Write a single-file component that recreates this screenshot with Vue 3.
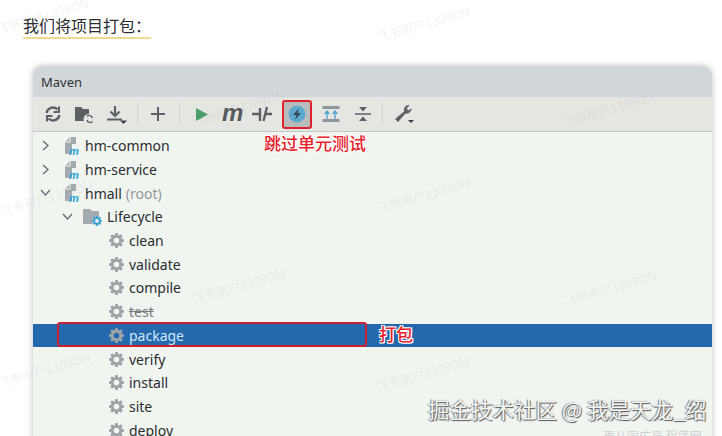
<script setup>
const tree = [
  { name: 'hm-common', icon: 'module', level: 0, arrow: 'right' },
  { name: 'hm-service', icon: 'module', level: 0, arrow: 'right' },
  { name: 'hmall', extra: '(root)', icon: 'module', level: 0, arrow: 'down' },
  { name: 'Lifecycle', icon: 'folder', level: 1, arrow: 'down' },
  { name: 'clean', icon: 'gear', level: 2 },
  { name: 'validate', icon: 'gear', level: 2 },
  { name: 'compile', icon: 'gear', level: 2 },
  { name: 'test', icon: 'gear', level: 2, struck: true },
  { name: 'package', icon: 'gear', level: 2, selected: true },
  { name: 'verify', icon: 'gear', level: 2 },
  { name: 'install', icon: 'gear', level: 2 },
  { name: 'site', icon: 'gear', level: 2 },
  { name: 'deploy', icon: 'gear', level: 2 }
]
const gearPath = 'M6.7 0h2.6l.4 2.1 1.2.5 1.8-1.2 1.9 1.9-1.2 1.8.5 1.2 2.1.4v2.6l-2.1.4-.5 1.2 1.2 1.8-1.9 1.9-1.8-1.2-1.2.5-.4 2.1H6.7l-.4-2.1-1.2-.5-1.8 1.2-1.9-1.9 1.2-1.8-.5-1.2L0 9.3V6.700l2.1-.4.5-1.2-1.2-1.8 1.9-1.9 1.8 1.2 1.2-.5zM8 5a3 3 0 1 0 0 6 3 3 0 0 0 0-6z'
const marks = [
  { x: -6, y: 8 }, { x: 375, y: 16 }, { x: 190, y: 100 }, { x: 560, y: 101 }, { x: -2, y: 190 },
  { x: 375, y: 187 }, { x: 190, y: 278 }, { x: 562, y: 280 }, { x: -4, y: 362 }, { x: 374, y: 366 }
]
</script>

<template>
  <div class="page">
    <p class="heading"><span class="heading-text">我们将项目打包：</span></p>
    <section class="window">
      <header class="title">Maven</header>
      <div class="toolbar">
        <svg class="tool" width="18" height="18" viewBox="0 0 18 18" fill="none" stroke="#5d6164" stroke-width="2.4">
          <path d="M2.500 8a6.500 6.500 0 0 1 11-3.500M15.500 10a6.500 6.500 0 0 1-11 3.500"/>
          <path d="M15 1.500v5.500h-5.500M3 16.500v-5.500h5.500" stroke-width="2"/>
        </svg>
        <svg class="tool folder-tool" width="21" height="19" viewBox="0 0 21 19">
          <path d="M1 2h6l2 2h6v5a5 5 0 0 0-5 7H1z" fill="#5d6164"/>
          <path d="M18.500 13a3.200 3.200 0 0 0-5.500-1.500M13 15a3.200 3.200 0 0 0 5.500 1.500" fill="none" stroke="#5d6164" stroke-width="1.300"/>
        </svg>
        <svg class="tool download-tool" width="20" height="19" viewBox="0 0 20 19" fill="none" stroke="#5d6164" stroke-width="2.200">
          <path d="M8 1v9M3.500 6.500 8 11l4.500-4.500M0 14.500h15"/>
          <path d="M13 15.500h7l-3.500 3.500z" fill="#3d4042" stroke="none"/>
        </svg>
        <span class="sep first"></span>
        <svg class="tool" width="14" height="14" viewBox="0 0 14 14" fill="none" stroke="#5d6164" stroke-width="2">
          <path d="M7 0v14M0 7h14"/>
        </svg>
        <span class="sep second"></span>
        <svg class="tool" width="14" height="15" viewBox="0 0 14 15"><path d="M1 1l12 6.500-12 6.500z" fill="#4a9e68"/></svg>
        <span class="tool-m">m</span>
        <svg class="tool break-tool" width="20" height="18" viewBox="0 0 20 18" fill="none" stroke="#5d6164" stroke-width="2.400">
          <path d="M0 9h7M13 9h7M8 3v13M15 2l-3.500 14"/>
        </svg>
        <span class="skip-button">
          <svg width="18" height="18" viewBox="0 0 18 18">
            <circle cx="9" cy="9" r="8.500" fill="#5fa9cf"/>
            <path d="M11 3 5 10h3.500L7 15l6-7H9.500z" fill="#34495c"/>
          </svg>
        </span>
        <svg class="tool expand-tool" width="18" height="18" viewBox="0 0 18 18">
          <rect x="0.500" y="1" width="17" height="3" fill="#8f9498"/>
          <rect x="0.500" y="14" width="17" height="3" fill="#8f9498"/>
          <path d="M5 14V7M2.800 9 5 6l2.200 3M13 14V7M10.800 9 13 6l2.200 3" fill="none" stroke="#4ba3d1" stroke-width="1.300"/>
        </svg>
        <svg class="tool collapse-tool" width="16" height="18" viewBox="0 0 16 18">
          <path d="M4 2h8L8 6.500zM4 16h8L8 11.500z" fill="#5d6164"/>
          <path d="M0 9h16" stroke="#5d6164" stroke-width="1.600"/>
        </svg>
        <span class="sep third"></span>
        <svg class="tool" width="21" height="20" viewBox="0 0 21 20">
          <path d="M15 1a5 5 0 0 0-5 6.500L1 15l3 3 7.500-8.500A5 5 0 0 0 17.500 4l-3 2.500-2-2L15.500 1.500z" fill="#5d6164"/>
          <path d="M14 16h6l-3 3z" fill="#3c3f41"/>
        </svg>
      </div>
      <ul class="tree">
        <li v-for="row in tree" :key="row.name" class="row" :class="[`level-${row.level}`, { selected: row.selected }]">
          <svg v-if="row.arrow" class="arrow" width="11" height="11" viewBox="0 0 11 11" fill="none" stroke="#6b6f72" stroke-width="1.400">
            <path :d="row.arrow === 'right' ? 'M3 1l5 4.500-5 4.500' : 'M1 3l4.500 5 4.500-5'"/>
          </svg>
          <svg v-if="row.icon === 'module'" class="icon module" width="18" height="20" viewBox="0 0 18 20">
            <path d="M6 1h6v7H8v10H1V6z" fill="#a4abb0"/>
            <path d="M6 1v5H1" fill="none" stroke="#f1f5f0" stroke-width="1"/>
            <text x="5" y="19" class="module-m">m</text>
          </svg>
          <svg v-else-if="row.icon === 'folder'" class="icon folder" width="19" height="18" viewBox="0 0 19 18">
            <path d="M0 1h7l2 2h7v6a5 5 0 0 0-6 7H0z" fill="#a4abb0"/>
            <path :d="gearPath" transform="translate(9 8) scale(.62)" fill="#3da2d4" fill-rule="evenodd"/>
          </svg>
          <svg v-else class="icon gear" width="15" height="15" viewBox="0 0 16 16">
            <path :d="gearPath" fill="#9ea3a6" fill-rule="evenodd"/>
          </svg>
          <span class="label" :class="{ struck: row.struck }">{{ row.name }}</span>
          <span v-if="row.extra" class="extra">{{ row.extra }}</span>
        </li>
      </ul>
    </section>

    <span class="skip-label">跳过单元测试</span>
    <span class="package-box"></span>
    <span class="package-label">打包</span>
    <span class="credit">掘金技术社区 @ 我是天龙_绍</span>
    <span class="credit-sub">更从同広员 程序网</span>
    <span v-for="m in marks" :key="`${m.x}-${m.y}`" class="mark" :style="{ left: `${m.x}px`, top: `${m.y}px` }">飞书用户1309ON</span>
  </div>
</template>

<style>
html, body { margin: 0; background: #fff; overflow: hidden; }
</style>

<style scoped>
.page {
  position: relative;
  width: 722px;
  height: 436px;
  overflow: hidden;
  background: #fff;
  font-family: "Noto Sans", "Noto Sans CJK SC", sans-serif;
  color: #25282b;
}
.heading {
  margin: 0;
  padding: 14px 0 0 23px;
  height: 51px;
  box-sizing: border-box;
  font-size: 16px;
  line-height: 22px;
}
.heading-text {
  display: inline-block;
  height: 23px;
  border-bottom: 2px solid #efd98e;
  font-family: "Noto Sans CJK SC", sans-serif;
  color: #2b2d30;
}
.window {
  margin: 15px 0 0 33px;
  width: 679px;
  height: 390px;
  border-radius: 9px 9px 0 0;
  background: #f1f5f0;
  box-shadow: 0 0 6px rgba(90, 95, 100, .4);
  overflow: hidden;
}
.title {
  height: 31px;
  padding-left: 8px;
  background: #d1d7d9;
  font-size: 13px;
  line-height: 33px;
  color: #2f3336;
}
.toolbar {
  display: flex;
  align-items: center;
  height: 35px;
  box-sizing: border-box;
  padding-left: 11px;
  background: #e4e6e1;
  border-bottom: 1px solid #c4c7c6;
}
.tool { flex: none; }
.folder-tool { margin-left: 12px; }
.download-tool { margin-left: 12px; }
.break-tool { margin-left: 9px; }
.expand-tool { margin-left: 10px; }
.collapse-tool { margin-left: 15px; }
.sep {
  flex: none;
  width: 1px;
  height: 22px;
  background: #cfd2cf;
}
.sep.first { margin: 0 13px 0 10px; }
.sep.second { margin: 0 15px 0 14px; }
.sep.third { margin: 0 11px 0 11px; }
.tool-m {
  margin-left: 13px;
  font: italic 700 24px/20px "Liberation Sans", sans-serif;
  color: #55595c;
  position: relative;
  top: -1px;
}
.skip-button {
  display: flex;
  align-items: center;
  justify-content: center;
  flex: none;
  width: 30px;
  height: 29px;
  margin-left: 10px;
  box-sizing: border-box;
  border: 2.500px solid #e0202c;
  border-radius: 3px;
  background: #b9bcbc;
}
.tree {
  list-style: none;
  margin: 0;
  padding: 2px 0 0;
}
.row {
  position: relative;
  display: flex;
  align-items: center;
  height: 23.700px;
  font-size: 14px;
  color: #2a2d30;
}
.level-0 { padding-left: 31px; }
.level-1 { padding-left: 50px; }
.level-2 { padding-left: 76px; }
.selected { background: #2469ae; color: #d2e6f7; }
.arrow { position: absolute; top: 6px; }
.level-0 .arrow { left: 7px; }
.level-1 .arrow { left: 29px; }
.icon { flex: none; }
.module { margin-right: 3px; }
.folder { margin-right: 5px; }
.gear { margin-right: 5px; }
.module-m {
  font: italic 700 11px "Liberation Sans", sans-serif;
  fill: #27a3d8;
}
.label { white-space: nowrap; }
.struck { color: #777b7e; text-decoration: line-through; }
.extra { margin-left: 4px; color: #93979a; }
.skip-label, .package-label {
  position: absolute;
  font-family: "Noto Sans CJK SC", sans-serif;
  font-weight: 500;
  color: #e8212b;
  text-shadow: 1px 1px 0 #fff, -1px -1px 0 #fff, 1px -1px 0 #fff, -1px 1px 0 #fff;
}
.skip-label { left: 264px; top: 131px; font-size: 17px; line-height: 24px; }
.package-label { left: 379px; top: 322px; font-size: 17px; line-height: 24px; }
.package-box {
  position: absolute;
  left: 57px;
  top: 322px;
  width: 310px;
  height: 25px;
  box-sizing: border-box;
  border: 2.500px solid #c8202f;
  border-radius: 3px;
}
.credit {
  position: absolute;
  left: 428px;
  top: 395px;
  font-family: "Noto Sans CJK SC", sans-serif;
  font-size: 21.500px;
  line-height: 28px;
  white-space: nowrap;
  color: #f3f5f2;
  text-shadow: 1px 1px 1px #55585a, -1px 0 1px #77797b;
}
.credit-sub {
  position: absolute;
  left: 603px;
  top: 428px;
  font-family: "Noto Sans CJK SC", sans-serif;
  font-size: 12px;
  line-height: 16px;
  color: #cfd2d0;
  white-space: nowrap;
}
.mark {
  position: absolute;
  font-family: "Noto Sans CJK SC", sans-serif;
  font-size: 12.500px;
  line-height: 16px;
  white-space: nowrap;
  color: rgba(120, 125, 130, .11);
  transform: rotate(-16deg);
  pointer-events: none;
}
</style>
